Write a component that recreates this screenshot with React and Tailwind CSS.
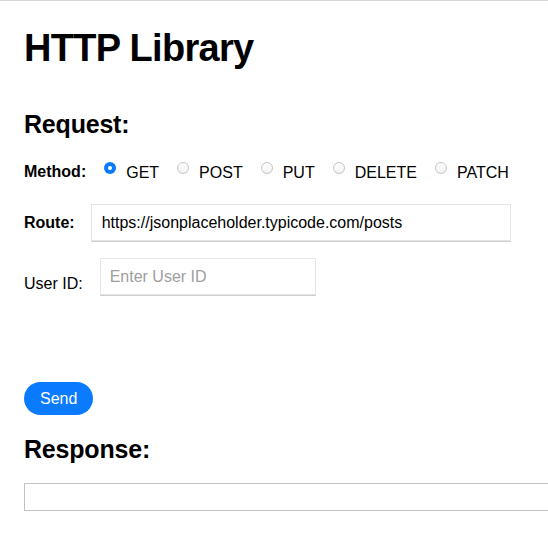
import React, { useState } from 'react';

const methods = ['GET', 'POST', 'PUT', 'DELETE', 'PATCH'];

// petit bouton radio dessiné à la main pour garder le rendu du navigateur d'origine
const Radio = ({ checked }) => (
    checked ? (
        <span className="h-3 w-3 rounded-full bg-[#0a7aff] flex items-center justify-center shrink-0">
            <span className="h-[4px] w-[4px] rounded-full bg-white"></span>
        </span>
    ) : (
        <span className="h-3 w-3 rounded-full border border-[#c4c4c4] bg-gradient-to-b from-white to-[#f2f2f2] shrink-0"></span>
    )
);

const App = () => {
    const [method, setMethod] = useState('GET');
    const [route, setRoute] = useState('https://jsonplaceholder.typicode.com/posts');
    const [userId, setUserId] = useState('');

    return (
        <div className="min-h-[543px] overflow-hidden border-t border-[#d6d6d6] bg-white px-6 text-black font-['Liberation_Sans',Arial,sans-serif]">
            <h1 className="mt-[25px] text-[38px] leading-[44px] font-bold tracking-[-0.7px]">HTTP Library</h1>

            <h2 className="mt-[40px] text-[25px] leading-[28px] font-bold tracking-[-0.2px]">Request:</h2>

            <div className="mt-[24px] flex items-start text-[16px] leading-[20px]">
                <span className="font-bold">Method:</span>
                <div className="ml-[18px] flex items-start gap-[18px]">
                    {methods.map(m => (
                        <button key={m} onClick={() => setMethod(m)} className="flex items-start gap-[10px]">
                            <Radio checked={method === m} />
                            <span className="mt-[1px]">{m}</span>
                        </button>
                    ))}
                </div>
            </div>

            <div className="mt-[21px] flex items-center">
                <label className="text-[16px] leading-[20px] font-bold">Route:</label>
                <input
                    value={route}
                    onChange={e => setRoute(e.target.value)}
                    className="ml-[16px] h-[37px] w-[420px] border border-[#e4e4e4] px-[10px] text-[16px] shadow-[0_1px_0_#cfcfcf] outline-none"
                />
            </div>

            <div className="mt-[17px] flex items-start">
                <label className="pt-[16px] text-[16px] leading-[20px]">User ID:</label>
                <input
                    value={userId}
                    onChange={e => setUserId(e.target.value)}
                    placeholder="Enter User ID"
                    className="ml-[17px] h-[37px] w-[216px] border border-[#e4e4e4] px-[9px] text-[16px] shadow-[0_1px_0_#cfcfcf] outline-none placeholder:text-[#9e9e9e]"
                />
            </div>

            <button className="mt-[87px] h-[33px] rounded-full bg-[#0a7aff] px-4 text-[16px] leading-[20px] text-white">
                Send
            </button>

            <h2 className="mt-[20px] text-[25px] leading-[28px] font-bold tracking-[-0.2px]">Response:</h2>

            <div className="mt-[20px] h-[28px] w-[560px] border border-[#c2c2c2]"></div>
        </div>
    );
};

export default App;
